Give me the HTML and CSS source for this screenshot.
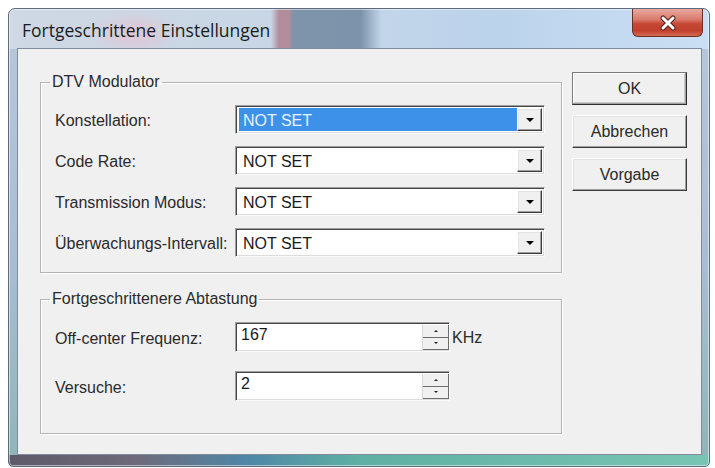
FILE: index.html
```html
<!DOCTYPE html>
<html lang="de">
<head>
<meta charset="utf-8">
<title>Fortgeschrittene Einstellungen</title>
<link rel="stylesheet" href="styles.css">
</head>
<body>
<div class="window">
  <div class="titlebar">
    <span class="title">Fortgeschrittene Einstellungen</span>
    <div class="close">
      <svg width="20" height="16" viewBox="0 0 20 16">
        <path d="M5 3 L15 13 M15 3 L5 13" stroke="#5a1f18" stroke-width="5" stroke-linecap="round"/>
        <path d="M5 3 L15 13 M15 3 L5 13" stroke="#ffffff" stroke-width="3" stroke-linecap="round"/>
      </svg>
    </div>
  </div>
  <div class="client">
    <div class="groups">
      <fieldset class="group g1">
        <legend>DTV Modulator</legend>
        <div class="grid grid-combos">
          <label>Konstellation:</label>
          <div class="combo selected"><span class="val">NOT SET</span><span class="drop"><i class="tri"></i></span></div>
          <label>Code Rate:</label>
          <div class="combo"><span class="val">NOT SET</span><span class="drop"><i class="tri"></i></span></div>
          <label>Transmission Modus:</label>
          <div class="combo"><span class="val">NOT SET</span><span class="drop"><i class="tri"></i></span></div>
          <label>Überwachungs-Intervall:</label>
          <div class="combo"><span class="val">NOT SET</span><span class="drop"><i class="tri"></i></span></div>
        </div>
      </fieldset>
      <fieldset class="group g2">
        <legend>Fortgeschrittenere Abtastung</legend>
        <div class="grid grid-spins">
          <label>Off-center Frequenz:</label>
          <div class="field">
            <div class="spin"><span class="val">167</span><span class="spinner"><span class="half"><i class="up"></i></span><span class="half"><i class="down"></i></span></span></div>
            <span class="unit">KHz</span>
          </div>
          <label>Versuche:</label>
          <div class="field">
            <div class="spin"><span class="val">2</span><span class="spinner"><span class="half"><i class="up"></i></span><span class="half"><i class="down"></i></span></span></div>
          </div>
        </div>
      </fieldset>
    </div>
    <div class="buttons">
      <button class="btn default">OK</button>
      <button class="btn">Abbrechen</button>
      <button class="btn">Vorgabe</button>
    </div>
  </div>
</div>
</body>
</html>
```
FILE: styles.css
```css
body {
  margin: 0;
  background: #ffffff;
  font-family: "Liberation Sans", Arial, sans-serif;
  font-size: 16px;
  color: #202020;
}

.window {
  width: 702px;
  height: 459px;
  margin: 8px 0 0 8px;
  box-sizing: border-box;
  border: 1px solid #5b6a7c;
  border-radius: 7px 7px 5px 5px;
  padding: 0 7px 11px 8px;
  display: flex;
  flex-direction: column;
  box-shadow: inset 0 0 0 1px rgba(255, 255, 255, 0.5);
  background:
    linear-gradient(90deg, #5d5a6a 0, #6f6a7a 18%, #4f87a7 34%, #5fb0a3 50%, #79c5b3 100%) bottom / 100% 11px no-repeat,
    radial-gradient(ellipse 45px 24px at 125px 24px, rgba(228, 196, 212, 0.9), rgba(228, 196, 212, 0) 100%) top / 100% 40px no-repeat,
    linear-gradient(90deg, rgba(0,0,0,0) 262px, rgba(160, 80, 95, 0.55) 270px, rgba(160, 80, 95, 0.55) 280px, rgba(100, 125, 150, 0.75) 284px, rgba(100, 125, 150, 0.75) 352px, rgba(0,0,0,0) 372px) top / 100% 40px no-repeat,
    linear-gradient(90deg, #cfd8e3 0, #c7d6e6 40%, #bcd3ec 70%, #cadff3 100%) top / 100% 40px no-repeat,
    linear-gradient(180deg, #b8c8da 0, #a9bdd2 55%, #8fb5b6 100%);
}

.titlebar {
  height: 39px;
  flex: none;
  display: flex;
  align-items: flex-start;
}

.title {
  font-family: "Open Sans", "Liberation Sans", sans-serif;
  font-size: 17.5px;
  line-height: 24px;
  color: #1b1b1b;
  margin: 9px 0 0 5px;
}

.close {
  margin-left: auto;
  margin-right: -1px;
  width: 71px;
  height: 28px;
  box-sizing: border-box;
  border: 1px solid #6a3028;
  border-top: none;
  border-radius: 0 0 6px 6px;
  background: linear-gradient(180deg, #e9aa9f 0, #d9786a 40%, #c64634 55%, #c0402e 80%, #d66a52 100%);
  display: flex;
  align-items: center;
  justify-content: center;
}

.client {
  flex: 1;
  background: #f0f0f0;
  border: 1px solid #7f8c9b;
  display: flex;
  align-items: flex-start;
  gap: 10px;
  padding: 23px 0 0 22px;
}

.groups {
  width: 522px;
  display: flex;
  flex-direction: column;
  gap: 17px;
  margin-top: 1px;
}

.group {
  margin: 0;
  min-width: 0;
  border: 1px solid #b4b4b4;
  box-shadow: inset 1px 1px 0 #ffffff, 1px 1px 0 #ffffff;
  padding: 14px 15px 15px 14px;
}

.g2 {
  padding-bottom: 32px;
}

.group legend {
  padding: 0 2px;
  margin-left: -5px;
  line-height: 18px;
  font-size: 16px;
  color: #2a2a2a;
}

.grid {
  display: grid;
  grid-template-columns: 180px auto;
  align-items: center;
}

.grid-combos {
  row-gap: 12px;
}

.grid-spins {
  row-gap: 19px;
}

.grid label {
  color: #2a2a2a;
  white-space: nowrap;
  padding-top: 3px;
}

.combo,
.spin {
  box-sizing: border-box;
  display: flex;
  background: #ffffff;
  border: 1px solid;
  border-color: #a0a0a0 #fafafa #fafafa #a0a0a0;
  box-shadow: inset 1px 1px 0 #464646, inset -1px -1px 0 #dcdcdc;
}

.combo {
  width: 310px;
  height: 29px;
  padding: 2px;
}

.val {
  flex: 1;
  display: flex;
  align-items: center;
  padding-left: 4px;
  color: #1a1a1a;
}

.combo .val {
  padding-left: 4px;
  padding-top: 3px;
  margin-left: 1px;
}

.combo.selected .val {
  background: #3d91e8;
  color: #e6f2ff;
}

.drop {
  width: 25px;
  box-sizing: border-box;
  background: #f0f0f0;
  border: 1px solid;
  border-color: #ffffff #3c3c3c #3c3c3c #ffffff;
  box-shadow: inset -1px -1px 0 #a0a0a0, inset 1px 1px 0 #e3e3e3;
  display: flex;
  align-items: center;
  justify-content: center;
}

.tri {
  width: 0;
  height: 0;
  border-left: 4px solid transparent;
  border-right: 4px solid transparent;
  border-top: 4px solid #000000;
}

.field {
  display: flex;
  align-items: center;
  gap: 2px;
}

.spin {
  width: 215px;
  height: 30px;
  padding: 2px 0 1px 2px;
}

.spin .val {
  padding-left: 3px;
  align-items: flex-start;
  padding-top: 1px;
}

.spinner {
  width: 26px;
  display: flex;
  flex-direction: column;
  border-left: 1px solid #d8d8d8;
}

.half {
  flex: 1;
  background: #f0f0f0;
  border-bottom: 1px solid #6e6e6e;
  border-right: 1px solid #6e6e6e;
  display: flex;
  align-items: center;
  justify-content: center;
}

.up {
  width: 0;
  height: 0;
  border-left: 2px solid transparent;
  border-right: 2px solid transparent;
  border-bottom: 2px solid #222;
}

.down {
  width: 0;
  height: 0;
  border-left: 2px solid transparent;
  border-right: 2px solid transparent;
  border-top: 2px solid #222;
}

.unit {
  color: #2a2a2a;
  padding-top: 2px;
}

.buttons {
  width: 115px;
  display: flex;
  flex-direction: column;
  gap: 10px;
}

.btn {
  width: 115px;
  height: 33px;
  padding: 0;
  font-family: "Liberation Sans", Arial, sans-serif;
  font-size: 16px;
  color: #2a2a2a;
  background: #f0f0f0;
  border: 1px solid;
  border-color: #ffffff #3c3c3c #3c3c3c #ffffff;
  box-shadow: inset -1px -1px 0 #a0a0a0, inset 1px 1px 0 #e3e3e3;
}

.btn.default {
  border-color: #7a7a7a #2e2e2e #2e2e2e #7a7a7a;
  box-shadow: inset -1px -1px 0 #a0a0a0, inset 1px 1px 0 #ffffff, inset -2px -2px 0 #c8c8c8;
}
```
